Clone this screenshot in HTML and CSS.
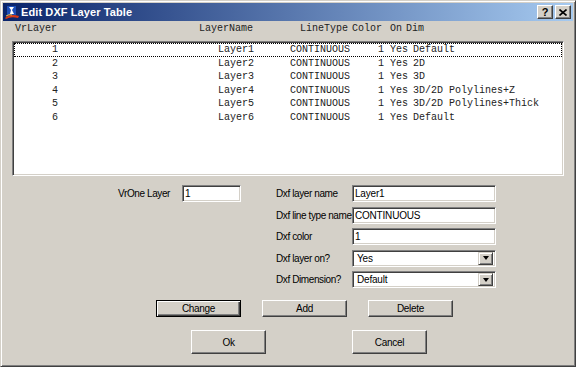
FILE: index.html
```html
<!DOCTYPE html>
<html lang="en">
<head>
    <meta charset="UTF-8">
    <title>Edit DXF Layer Table</title>
    <link rel="stylesheet" href="styles.css">
</head>
<body>
    <div class="window">
        <div class="titlebar">
            <svg class="app-icon" width="16" height="16" viewBox="0 0 16 16">
                <rect x="3" y="2" width="9" height="9" fill="#1c4fb8"/>
                <path d="M5 3 L10 3 L8 6 L10 10 L6 10 L7 6 Z" fill="#fff"/>
                <path d="M1 14 Q6 9 15 12 L14 14 Q7 12 2 15 Z" fill="#d83a16"/>
                <path d="M2 12 Q5 10 8 11" stroke="#f0c040" stroke-width="1" fill="none"/>
            </svg>
            <span class="title">Edit DXF Layer Table</span>
            <div class="caption-btns">
                <span class="cap-btn">?</span>
                <span class="cap-btn">
                    <svg width="8" height="7" viewBox="0 0 8 7"><path d="M0.5 0.5 L7.5 6.5 M7.5 0.5 L0.5 6.5" stroke="#000" stroke-width="1.6"/></svg>
                </span>
            </div>
        </div>

        <div class="client">
            <div class="list-head">
                <span class="h-vr">VrLayer</span>
                <span class="h-nm">LayerName</span>
                <span class="h-lt">LineType</span>
                <span class="h-cl">Color</span>
                <span class="h-on">On</span>
                <span>Dim</span>
            </div>

            <div class="listbox">
                <div class="row focus"><span class="vr">1</span><span class="nm">Layer1</span><span class="lt">CONTINUOUS</span><span class="cl">1</span><span class="on">Yes</span><span>Default</span></div>
                <div class="row"><span class="vr">2</span><span class="nm">Layer2</span><span class="lt">CONTINUOUS</span><span class="cl">1</span><span class="on">Yes</span><span>2D</span></div>
                <div class="row"><span class="vr">3</span><span class="nm">Layer3</span><span class="lt">CONTINUOUS</span><span class="cl">1</span><span class="on">Yes</span><span>3D</span></div>
                <div class="row"><span class="vr">4</span><span class="nm">Layer4</span><span class="lt">CONTINUOUS</span><span class="cl">1</span><span class="on">Yes</span><span>3D/2D Polylines+Z</span></div>
                <div class="row"><span class="vr">5</span><span class="nm">Layer5</span><span class="lt">CONTINUOUS</span><span class="cl">1</span><span class="on">Yes</span><span>3D/2D Polylines+Thick</span></div>
                <div class="row"><span class="vr">6</span><span class="nm">Layer6</span><span class="lt">CONTINUOUS</span><span class="cl">1</span><span class="on">Yes</span><span>Default</span></div>
            </div>

            <div class="form">
                <div class="vrone">
                    <label class="vrone-label">VrOne Layer</label>
                    <div class="field small">1</div>
                </div>
                <div class="dxf-grid">
                    <label>Dxf layer name</label>
                    <div class="field">Layer1</div>
                    <label>Dxf line type name</label>
                    <div class="field">CONTINUOUS</div>
                    <label>Dxf color</label>
                    <div class="field">1</div>
                    <label>Dxf layer on?</label>
                    <div class="field combo"><span class="combo-text">Yes</span><span class="drop"><i></i></span></div>
                    <label>Dxf Dimension?</label>
                    <div class="field combo"><span class="combo-text">Default</span><span class="drop"><i></i></span></div>
                </div>
            </div>

            <div class="btn-row edit">
                <button class="btn default">Change</button>
                <button class="btn">Add</button>
                <button class="btn">Delete</button>
            </div>

            <div class="btn-row main">
                <button class="btn big">Ok</button>
                <button class="btn big">Cancel</button>
            </div>
        </div>
    </div>
</body>
</html>
```

FILE: styles.css
```css
/* Fenêtre style Windows classique */
html, body {
    margin: 0;
    padding: 0;
    background: #d4d0c8;
}

.window {
    width: 576px;
    height: 367px;
    box-sizing: border-box;
    padding: 2px;
    border: 1px solid;
    border-color: #d4d0c8 #404040 #404040 #d4d0c8;
    box-shadow: inset 1px 1px #fff, inset -1px -1px #808080;
    background: #d4d0c8;
    display: flex;
    flex-direction: column;
    font-family: 'Liberation Sans', Arial, sans-serif;
    font-size: 10px;
    color: #000;
}

/* Barre de titre */
.titlebar {
    height: 18px;
    display: flex;
    align-items: center;
    padding-left: 1px;
    background: linear-gradient(to right, #0a246a, #a6caf0);
}

.app-icon {
    margin-right: 1px;
}

.title {
    color: #fff;
    font-weight: bold;
    font-size: 11px;
    letter-spacing: 0.1px;
}

.caption-btns {
    margin-left: auto;
    display: flex;
    gap: 2px;
    margin-right: 2px;
}

.cap-btn {
    width: 16px;
    height: 14px;
    box-sizing: border-box;
    background: #d4d0c8;
    border: 1px solid;
    border-color: #fff #404040 #404040 #fff;
    box-shadow: inset -1px -1px #808080;
    display: flex;
    align-items: center;
    justify-content: center;
    font-weight: bold;
    font-size: 11px;
    line-height: 1;
}

/* Zone client */
.client {
    flex: 1;
    padding-top: 2px;
}

.list-head,
.listbox {
    font-family: 'Liberation Mono', 'Courier New', monospace;
    font-size: 10px;
    color: #222;
}

.list-head {
    display: flex;
    height: 12px;
    line-height: 12px;
    padding-left: 12px;
    white-space: pre;
}

.h-vr { width: 184px; }
.h-nm { width: 101px; }
.h-lt { width: 52px; }
.h-cl { width: 38px; }
.h-on { width: 16px; }

/* Liste */
.listbox {
    margin: 6px 0 0 9px;
    width: 552px;
    height: 135px;
    box-sizing: border-box;
    background: #fff;
    border: 1px solid;
    border-color: #808080 #fff #fff #808080;
    box-shadow: inset 1px 1px #404040, inset -1px -1px #d4d0c8;
    padding: 1px;
}

.row {
    display: flex;
    height: 13.6px;
    line-height: 13.6px;
    white-space: pre;
    box-sizing: border-box;
}

.row.focus {
    outline: 1px dotted #000;
    outline-offset: -1px;
}

.row .vr { width: 44px; text-align: right; }
.row .nm { margin-left: 160px; width: 72px; }
.row .lt { width: 88px; }
.row .cl { width: 6px; text-align: right; }
.row .on { margin-left: 6px; width: 23px; }

/* Formulaire */
.form {
    display: flex;
    margin-top: 9px;
}

.vrone {
    display: flex;
    align-items: center;
    height: 17px;
}

.vrone-label {
    width: 167px;
    text-align: right;
    margin-right: 12px;
}

label {
    letter-spacing: -0.4px;
    white-space: nowrap;
}

.field {
    height: 17px;
    box-sizing: border-box;
    background: #fff;
    border: 1px solid;
    border-color: #808080 #fff #fff #808080;
    box-shadow: inset 1px 1px #404040, inset -1px -1px #d4d0c8;
    padding: 0 2px;
    line-height: 15px;
    font-size: 10px;
    letter-spacing: -0.2px;
}

.field.small {
    width: 59px;
}

.dxf-grid {
    margin-left: 35px;
    display: grid;
    grid-template-columns: 76px 144px;
    grid-auto-rows: 17px;
    row-gap: 4.5px;
    align-items: center;
}

.combo {
    display: flex;
    align-items: center;
    padding: 0 2px 0 4px;
}

.combo-text {
    flex: 1;
}

.drop {
    width: 15px;
    height: 13px;
    box-sizing: border-box;
    background: #d4d0c8;
    border: 1px solid;
    border-color: #d4d0c8 #404040 #404040 #d4d0c8;
    box-shadow: inset 1px 1px #fff, inset -1px -1px #808080;
    display: flex;
    align-items: center;
    justify-content: center;
}

.drop i {
    width: 0;
    height: 0;
    border-left: 3.5px solid transparent;
    border-right: 3.5px solid transparent;
    border-top: 4px solid #000;
}

/* Boutons */
.btn-row {
    display: flex;
}

.btn-row.edit {
    margin: 12px 0 0 153px;
    gap: 21px;
}

.btn-row.main {
    margin: 13px 0 0 188px;
    gap: 86px;
}

.btn {
    width: 85px;
    height: 17px;
    padding: 0;
    box-sizing: border-box;
    background: #d4d0c8;
    border: 1px solid;
    border-color: #fff #404040 #404040 #fff;
    box-shadow: inset -1px -1px #808080;
    font-family: 'Liberation Sans', Arial, sans-serif;
    font-size: 10px;
    letter-spacing: -0.3px;
    color: #000;
}

.btn.default {
    border-color: #000;
    box-shadow: inset 1px 1px #fff, inset -1px -1px #404040, inset -2px -2px #808080;
}

.btn.big {
    width: 75px;
    height: 24px;
}
```
